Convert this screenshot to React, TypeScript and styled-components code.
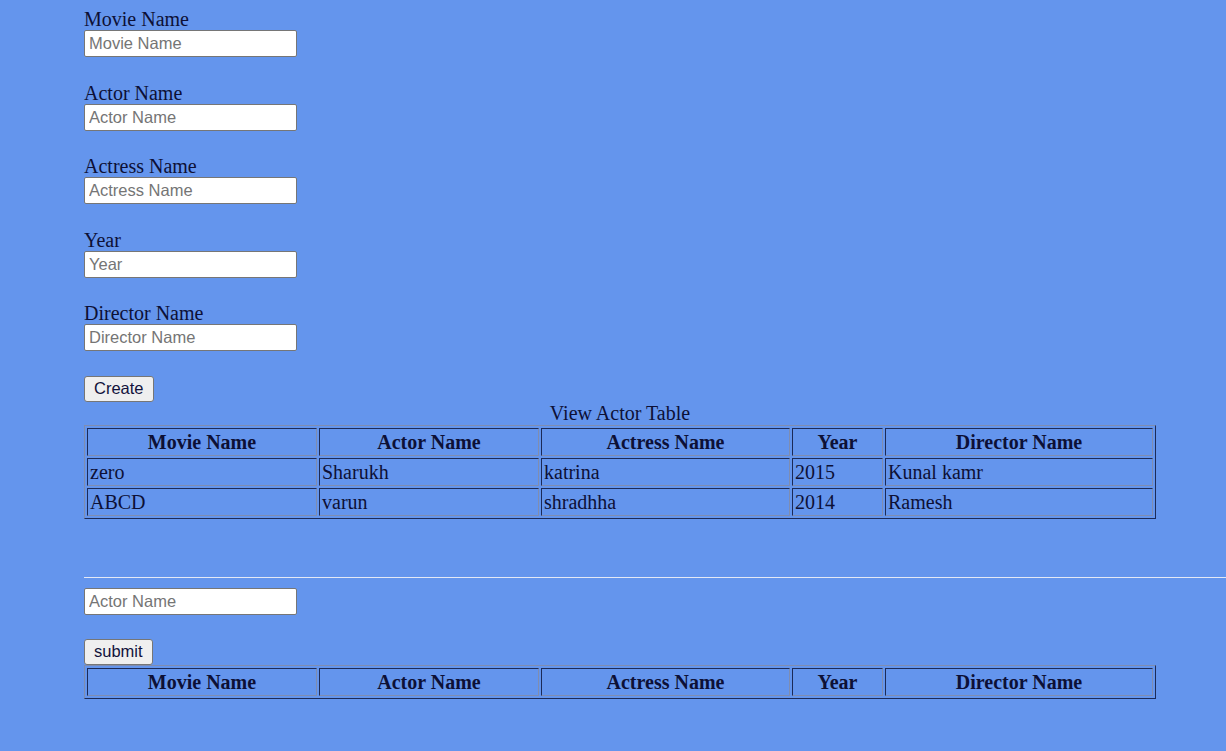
import React from "react";
import styled, { createGlobalStyle } from "styled-components";

const GlobalStyle = createGlobalStyle`
  html, body {
    margin: 0;
    padding: 0;
    background: #6495ed;
  }
  body {
    font-family: "Liberation Serif", "Times New Roman", serif;
    color: #0d1036;
  }
`;

const movies = [
  { movie: "zero", actor: "Sharukh", actress: "katrina", year: "2015", director: "Kunal kamr" },
  { movie: "ABCD", actor: "varun", actress: "shradhha", year: "2014", director: "Ramesh" },
];

const columns = [
  { label: "Movie Name", width: 230 },
  { label: "Actor Name", width: 220 },
  { label: "Actress Name", width: 249 },
  { label: "Year", width: 91 },
  { label: "Director Name", width: 268 },
];

const fields = ["Movie Name", "Actor Name", "Actress Name", "Year", "Director Name"];

export default function App() {
  return (
    <>
      <GlobalStyle />
      <Page>
        <Form>
          {fields.map((f) => (
            <Field key={f}>
              <Label>{f}</Label>
              <Input placeholder={f} />
            </Field>
          ))}
          <Button>Create</Button>
        </Form>

        <MovieTable>
          <Caption>View Actor Table</Caption>
          <HeadRow />
          <tbody>
            {movies.map((m) => (
              <tr key={m.movie}>
                <Td>{m.movie}</Td>
                <Td>{m.actor}</Td>
                <Td>{m.actress}</Td>
                <Td>{m.year}</Td>
                <Td>{m.director}</Td>
              </tr>
            ))}
          </tbody>
        </MovieTable>

        <Rule />

        <Search>
          <Input placeholder="Actor Name" />
          <Button>submit</Button>
        </Search>

        <MovieTable>
          <HeadRow />
        </MovieTable>
      </Page>
    </>
  );
}

const HeadRow = () => (
  <thead>
    <tr>
      {columns.map((c) => (
        <Th key={c.label} $w={c.width}>
          {c.label}
        </Th>
      ))}
    </tr>
  </thead>
);

const Page = styled.div`
  padding: 8px 0 40px 84px;
  min-height: 751px;
  box-sizing: border-box;
  font-size: 20px;
`;

const Form = styled.div`
  display: flex;
  flex-direction: column;
  align-items: flex-start;
`;

const Field = styled.div`
  display: flex;
  flex-direction: column;
  align-items: flex-start;
  margin-bottom: 24.5px;
`;

const Label = styled.label`
  font-size: 20px;
  line-height: 22px;
`;

const Input = styled.input`
  box-sizing: border-box;
  width: 213px;
  height: 27px;
  padding: 0 4px;
  margin: 0;
  border: 1px solid #767676;
  border-radius: 2px;
  background: #fff;
  font-family: "Liberation Sans", Arial, sans-serif;
  font-size: 16.5px;
  color: #000;
  &::placeholder {
    color: #757575;
  }
`;

const Button = styled.button`
  box-sizing: border-box;
  height: 26px;
  padding: 0 9px;
  margin: 0;
  border: 1px solid #767676;
  border-radius: 3px;
  background: #efefef;
  color: #12123c;
  font-family: "Liberation Sans", Arial, sans-serif;
  font-size: 16.5px;
`;

const MovieTable = styled.table`
  width: 1072px;
  table-layout: fixed;
  border-collapse: separate;
  border-spacing: 2px;
  border: 1px solid;
  border-color: #7f8db0 #1b2a58 #1b2a58 #7f8db0;
  font-size: 20px;
`;

const Caption = styled.caption`
  line-height: 23px;
  text-align: center;
`;

const cell = `
  box-sizing: border-box;
  height: 28px;
  padding: 0 2px;
  border: 1px solid;
  border-color: #1b2a58 #7f8db0 #7f8db0 #1b2a58;
  line-height: 24px;
  white-space: nowrap;
  overflow: hidden;
`;

const Th = styled.th<{ $w: number }>`
  ${cell}
  width: ${(p) => p.$w}px;
  font-weight: bold;
  text-align: center;
`;

const Td = styled.td`
  ${cell}
  text-align: left;
`;

const Rule = styled.hr`
  margin: 58px 0 10px;
  border: 0;
  border-top: 1px solid #e4e9f5;
  height: 0;
`;

const Search = styled.div`
  display: flex;
  flex-direction: column;
  align-items: flex-start;
  gap: 24px;
`;
